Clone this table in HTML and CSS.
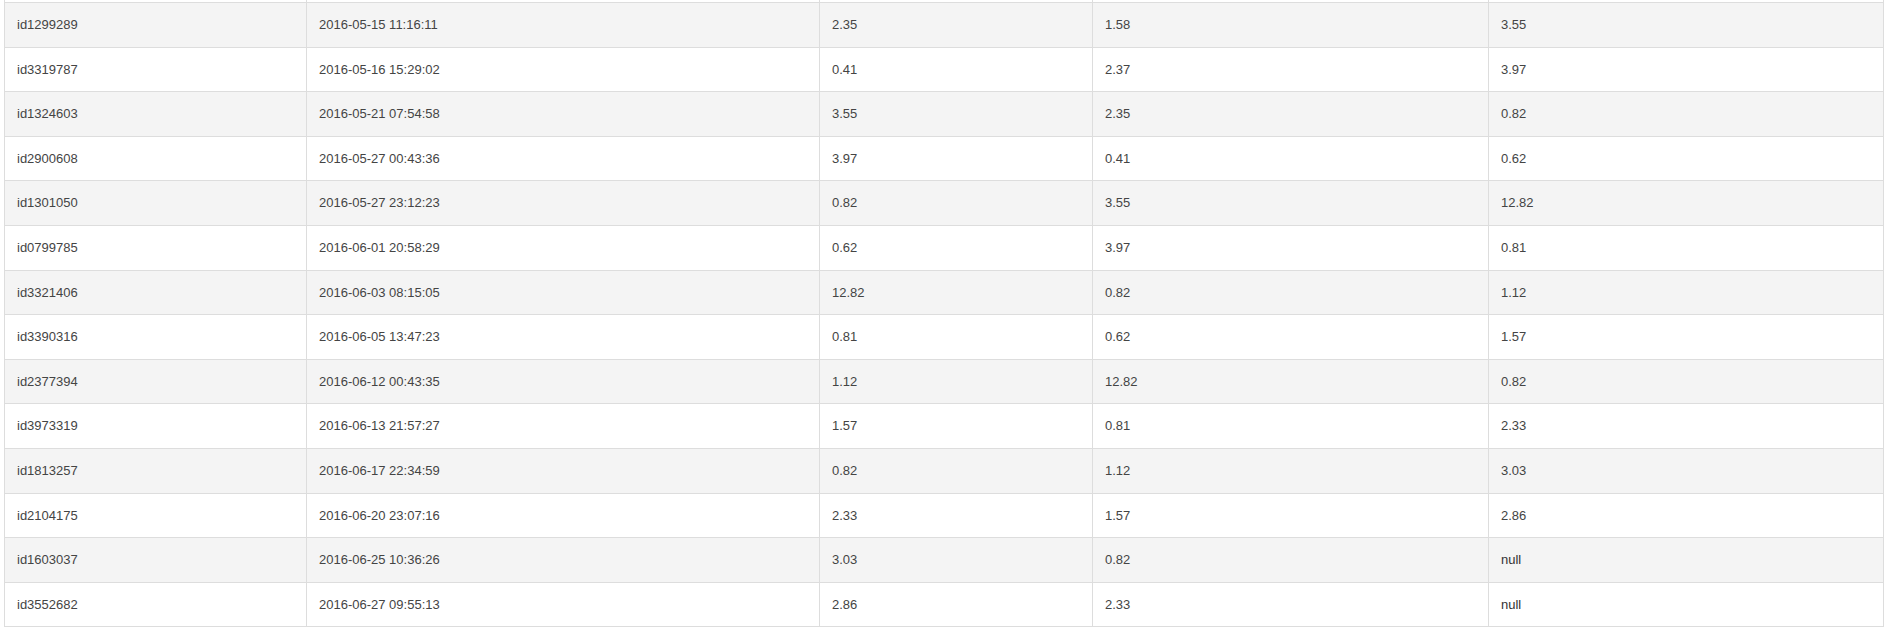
FILE: index.html
```html
<!DOCTYPE html>
<html>
<head>
<meta charset="utf-8">
<link rel="stylesheet" href="styles.css">
</head>
<body>
<table class="grid">
  <colgroup>
    <col class="c1"><col class="c2"><col class="c3"><col class="c4"><col class="c5">
  </colgroup>
  <tbody>
    <tr class="cut"><td></td><td></td><td></td><td></td><td></td></tr>
    <tr><td>id1299289</td><td>2016-05-15 11:16:11</td><td>2.35</td><td>1.58</td><td>3.55</td></tr>
    <tr><td>id3319787</td><td>2016-05-16 15:29:02</td><td>0.41</td><td>2.37</td><td>3.97</td></tr>
    <tr><td>id1324603</td><td>2016-05-21 07:54:58</td><td>3.55</td><td>2.35</td><td>0.82</td></tr>
    <tr><td>id2900608</td><td>2016-05-27 00:43:36</td><td>3.97</td><td>0.41</td><td>0.62</td></tr>
    <tr><td>id1301050</td><td>2016-05-27 23:12:23</td><td>0.82</td><td>3.55</td><td>12.82</td></tr>
    <tr><td>id0799785</td><td>2016-06-01 20:58:29</td><td>0.62</td><td>3.97</td><td>0.81</td></tr>
    <tr><td>id3321406</td><td>2016-06-03 08:15:05</td><td>12.82</td><td>0.82</td><td>1.12</td></tr>
    <tr><td>id3390316</td><td>2016-06-05 13:47:23</td><td>0.81</td><td>0.62</td><td>1.57</td></tr>
    <tr><td>id2377394</td><td>2016-06-12 00:43:35</td><td>1.12</td><td>12.82</td><td>0.82</td></tr>
    <tr><td>id3973319</td><td>2016-06-13 21:57:27</td><td>1.57</td><td>0.81</td><td>2.33</td></tr>
    <tr><td>id1813257</td><td>2016-06-17 22:34:59</td><td>0.82</td><td>1.12</td><td>3.03</td></tr>
    <tr><td>id2104175</td><td>2016-06-20 23:07:16</td><td>2.33</td><td>1.57</td><td>2.86</td></tr>
    <tr><td>id1603037</td><td>2016-06-25 10:36:26</td><td>3.03</td><td>0.82</td><td class="null">null</td></tr>
    <tr><td>id3552682</td><td>2016-06-27 09:55:13</td><td>2.86</td><td>2.33</td><td class="null">null</td></tr>
  </tbody>
</table>
</body>
</html>
```
FILE: styles.css
```css
html, body {
  margin: 0;
  padding: 0;
  background: #fff;
}
body {
  padding: 0 2px 0 4px;
  font-family: "Liberation Sans", Arial, sans-serif;
  font-size: 13px;
  color: #444;
}
.grid {
  width: 1879px;
  border-collapse: collapse;
  table-layout: fixed;
}
.c1 { width: 302px; }
.c2 { width: 513px; }
.c3 { width: 273px; }
.c4 { width: 396px; }
.c5 { width: 395px; }
.grid td {
  border: 1px solid #ddd;
  padding: 12px 12px;
  line-height: 19.6px;
  white-space: nowrap;
  vertical-align: middle;
}
.grid tr:nth-child(even) td {
  background: #f4f4f4;
}
.grid tr.cut td {
  border-top: 0;
  padding: 0;
  height: 2px;
  line-height: 2px;
}
.grid td.null {
  color: #333;
}
```
